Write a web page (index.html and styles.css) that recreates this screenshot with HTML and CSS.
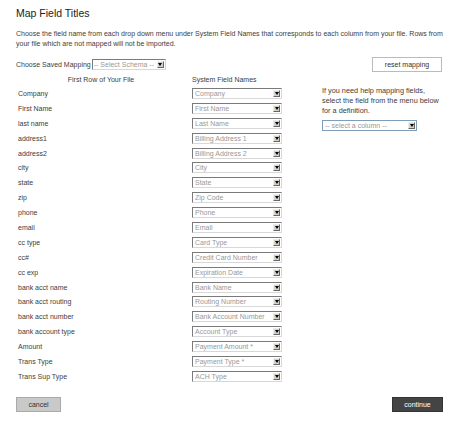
FILE: index.html
```html
<!DOCTYPE html>
<html>
<head>
<meta charset="utf-8">
<link rel="stylesheet" href="styles.css">
</head>
<body>
<div class="page">
  <h1 class="title">Map Field Titles</h1>
  <p class="intro">Choose the field name from each drop down menu under System Field Names that corresponds to each column from your file. Rows from your file which are not mapped will not be imported.</p>
  <div class="schema-bar">
    <div class="schema">
      <span class="schema-label">Choose Saved Mapping</span>
      <div class="select schema-select"><span class="val">-- Select Schema --</span><span class="arrow"><svg width="4" height="3" viewBox="0 0 4 3"><path d="M0 0H4L2 3Z" fill="#000"/></svg></span></div>
    </div>
    <button class="btn reset">reset mapping</button>
  </div>
  <div class="main">
    <div class="map">
      <div class="head"><span class="hcol1">First Row of Your File</span><span class="hcol2">System Field Names</span></div>
      <div class="row"><span class="lbl">Company</span><div class="select"><span class="val">Company</span><span class="arrow"><svg width="4" height="3" viewBox="0 0 4 3"><path d="M0 0H4L2 3Z" fill="#000"/></svg></span></div></div>
      <div class="row"><span class="lbl">First Name</span><div class="select"><span class="val">First Name</span><span class="arrow"><svg width="4" height="3" viewBox="0 0 4 3"><path d="M0 0H4L2 3Z" fill="#000"/></svg></span></div></div>
      <div class="row"><span class="lbl">last name</span><div class="select"><span class="val">Last Name</span><span class="arrow"><svg width="4" height="3" viewBox="0 0 4 3"><path d="M0 0H4L2 3Z" fill="#000"/></svg></span></div></div>
      <div class="row"><span class="lbl">address1</span><div class="select"><span class="val">Billing Address 1</span><span class="arrow"><svg width="4" height="3" viewBox="0 0 4 3"><path d="M0 0H4L2 3Z" fill="#000"/></svg></span></div></div>
      <div class="row"><span class="lbl">address2</span><div class="select"><span class="val">Billing Address 2</span><span class="arrow"><svg width="4" height="3" viewBox="0 0 4 3"><path d="M0 0H4L2 3Z" fill="#000"/></svg></span></div></div>
      <div class="row"><span class="lbl">city</span><div class="select"><span class="val">City</span><span class="arrow"><svg width="4" height="3" viewBox="0 0 4 3"><path d="M0 0H4L2 3Z" fill="#000"/></svg></span></div></div>
      <div class="row"><span class="lbl">state</span><div class="select"><span class="val">State</span><span class="arrow"><svg width="4" height="3" viewBox="0 0 4 3"><path d="M0 0H4L2 3Z" fill="#000"/></svg></span></div></div>
      <div class="row"><span class="lbl">zip</span><div class="select"><span class="val">Zip Code</span><span class="arrow"><svg width="4" height="3" viewBox="0 0 4 3"><path d="M0 0H4L2 3Z" fill="#000"/></svg></span></div></div>
      <div class="row"><span class="lbl">phone</span><div class="select"><span class="val">Phone</span><span class="arrow"><svg width="4" height="3" viewBox="0 0 4 3"><path d="M0 0H4L2 3Z" fill="#000"/></svg></span></div></div>
      <div class="row"><span class="lbl">email</span><div class="select"><span class="val">Email</span><span class="arrow"><svg width="4" height="3" viewBox="0 0 4 3"><path d="M0 0H4L2 3Z" fill="#000"/></svg></span></div></div>
      <div class="row"><span class="lbl">cc type</span><div class="select"><span class="val">Card Type</span><span class="arrow"><svg width="4" height="3" viewBox="0 0 4 3"><path d="M0 0H4L2 3Z" fill="#000"/></svg></span></div></div>
      <div class="row"><span class="lbl">cc#</span><div class="select"><span class="val">Credit Card Number</span><span class="arrow"><svg width="4" height="3" viewBox="0 0 4 3"><path d="M0 0H4L2 3Z" fill="#000"/></svg></span></div></div>
      <div class="row"><span class="lbl">cc exp</span><div class="select"><span class="val">Expiration Date</span><span class="arrow"><svg width="4" height="3" viewBox="0 0 4 3"><path d="M0 0H4L2 3Z" fill="#000"/></svg></span></div></div>
      <div class="row"><span class="lbl">bank acct name</span><div class="select"><span class="val">Bank Name</span><span class="arrow"><svg width="4" height="3" viewBox="0 0 4 3"><path d="M0 0H4L2 3Z" fill="#000"/></svg></span></div></div>
      <div class="row"><span class="lbl">bank acct routing</span><div class="select"><span class="val">Routing Number</span><span class="arrow"><svg width="4" height="3" viewBox="0 0 4 3"><path d="M0 0H4L2 3Z" fill="#000"/></svg></span></div></div>
      <div class="row"><span class="lbl">bank acct number</span><div class="select"><span class="val">Bank Account Number</span><span class="arrow"><svg width="4" height="3" viewBox="0 0 4 3"><path d="M0 0H4L2 3Z" fill="#000"/></svg></span></div></div>
      <div class="row"><span class="lbl">bank account type</span><div class="select"><span class="val">Account Type</span><span class="arrow"><svg width="4" height="3" viewBox="0 0 4 3"><path d="M0 0H4L2 3Z" fill="#000"/></svg></span></div></div>
      <div class="row"><span class="lbl">Amount</span><div class="select"><span class="val">Payment Amount *</span><span class="arrow"><svg width="4" height="3" viewBox="0 0 4 3"><path d="M0 0H4L2 3Z" fill="#000"/></svg></span></div></div>
      <div class="row"><span class="lbl">Trans Type</span><div class="select"><span class="val">Payment Type *</span><span class="arrow"><svg width="4" height="3" viewBox="0 0 4 3"><path d="M0 0H4L2 3Z" fill="#000"/></svg></span></div></div>
      <div class="row"><span class="lbl">Trans Sup Type</span><div class="select"><span class="val">ACH Type</span><span class="arrow"><svg width="4" height="3" viewBox="0 0 4 3"><path d="M0 0H4L2 3Z" fill="#000"/></svg></span></div></div>
    </div>
    <div class="help">
      <p class="help-text">If you need help mapping fields, select the field from the menu below for a definition.</p>
      <div class="select col-select"><span class="val">-- select a column --</span><span class="arrow"><svg width="4" height="3" viewBox="0 0 4 3"><path d="M0 0H4L2 3Z" fill="#000"/></svg></span></div>
    </div>
  </div>
  <div class="actions">
    <button class="btn cancel">cancel</button>
    <button class="btn continue">continue</button>
  </div>
</div>
</body>
</html>
```
FILE: styles.css
```css
html, body { margin: 0; padding: 0; background: #fff; }
body { font-family: "Liberation Sans", Arial, sans-serif; color: #3d3d3d; font-size: 7px; }
.page { width: 428px; padding: 7px 0 0 16px; }
.title { margin: 0; font-size: 10.5px; font-weight: normal; color: #222; line-height: 12px; }
.intro { margin: 10px 0 0 0; line-height: 10px; width: 432px; }
.schema-bar { display: flex; justify-content: space-between; align-items: center; margin-top: 8px; height: 15px; width: 428px; }
.schema { display: flex; align-items: center; gap: 1px; }
.select { box-sizing: border-box; display: flex; align-items: center; height: 11px; width: 90px; border: 1px solid; border-color: #7a7a7a #d8d8d8 #d8d8d8 #7a7a7a; background: #fff; padding-left: 2px; color: #999; font-size: 7px; }
.select .val { flex: 1; white-space: nowrap; overflow: hidden; line-height: 9px; }
.select .arrow { flex: none; width: 7px; height: 7px; background: #d4d0c8; border: 1px solid #eee; border-right-color: #666; border-bottom-color: #666; display: flex; align-items: center; justify-content: center; margin-right: 1px; box-sizing: border-box; }
.schema-select { width: 74px; padding-left: 1px; }
.btn { font-family: "Liberation Sans", Arial, sans-serif; font-size: 7px; padding: 0; margin: 0; box-sizing: border-box; cursor: pointer; }
.reset { width: 70px; height: 15px; background: #fff; border: 1px solid #bbb; color: #333; margin-right: 2px; }
.main { display: flex; margin-top: 0; }
.map { width: 307px; display: flex; flex-direction: column; }
.head { display: flex; height: 14px; align-items: center; }
.hcol1 { width: 170px; text-align: center; }
.hcol2 { padding-left: 6px; }
.row { display: flex; align-items: center; height: 14.9px; }
.lbl { width: 174px; padding-left: 2px; }
.help { padding-top: 14px; }
.help-text { margin: 0; line-height: 10px; width: 122px; font-size: 7.3px; }
.col-select { width: 95px; margin-top: 4px; border-color: #7f9db9; }
.actions { display: flex; justify-content: space-between; margin-top: 13px; width: 427px; }
.cancel { width: 45px; height: 15px; background: #c9c9c9; border: 1px solid #aaa; color: #333; }
.continue { width: 51px; height: 15px; background: #444; border: 1px solid #333; color: #fff; }
```
